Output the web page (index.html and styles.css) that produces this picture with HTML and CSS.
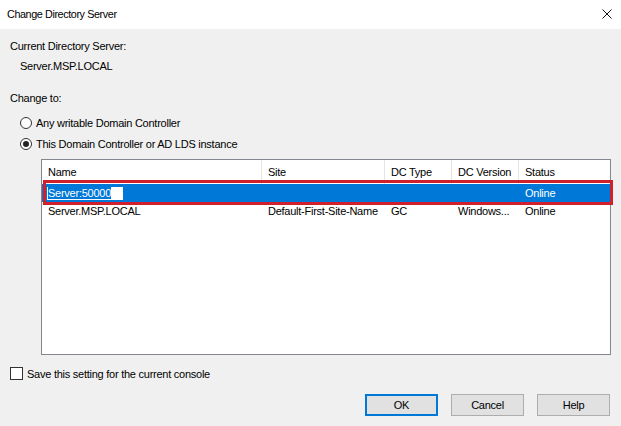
FILE: index.html
```html
<!DOCTYPE html>
<html lang="en">
<head>
    <meta charset="UTF-8">
    <title>Change Directory Server</title>
    <link rel="stylesheet" href="styles.css">
</head>
<body>
    <div class="dialog">
        <div class="titlebar">
            <span class="title">Change Directory Server</span>
            <svg class="close" width="10" height="10" viewBox="0 0 10 10">
                <path d="M0.5 0.5 L9.5 9.5 M9.5 0.5 L0.5 9.5" stroke="#111" stroke-width="1" fill="none"/>
            </svg>
        </div>

        <div class="content">
            <div class="label first">Current Directory Server:</div>
            <div class="label value">Server.MSP.LOCAL</div>
            <div class="label change">Change to:</div>

            <div class="radios">
                <div class="radio-row">
                    <span class="radio"></span>
                    <span>Any writable Domain Controller</span>
                </div>
                <div class="radio-row">
                    <span class="radio checked"></span>
                    <span>This Domain Controller or AD LDS instance</span>
                </div>
            </div>

            <div class="listview">
                <div class="lv-row lv-header">
                    <div class="cell">Name</div>
                    <div class="cell">Site</div>
                    <div class="cell">DC Type</div>
                    <div class="cell">DC Version</div>
                    <div class="cell">Status</div>
                </div>
                <div class="lv-row selected">
                    <div class="cell name-cell"><span class="edit"><span class="edit-text">Server:50000</span></span></div>
                    <div class="cell"></div>
                    <div class="cell"></div>
                    <div class="cell"></div>
                    <div class="cell">Online</div>
                </div>
                <div class="lv-row">
                    <div class="cell">Server.MSP.LOCAL</div>
                    <div class="cell">Default-First-Site-Name</div>
                    <div class="cell">GC</div>
                    <div class="cell">Windows...</div>
                    <div class="cell">Online</div>
                </div>
                <!-- red frame around the selected row -->
                <div class="highlight"></div>
            </div>

            <div class="check-row">
                <span class="checkbox"></span>
                <span>Save this setting for the current console</span>
            </div>

            <div class="buttons">
                <button class="btn default">OK</button>
                <button class="btn">Cancel</button>
                <button class="btn">Help</button>
            </div>
        </div>
    </div>
</body>
</html>
```

FILE: styles.css
```css
body {
    margin: 0;
    font-family: "Liberation Sans", Arial, sans-serif;
    font-size: 11px;
    letter-spacing: -0.25px;
    color: #000;
    background-color: #f0f0f0;
}

.dialog {
    width: 621px;
    height: 426px;
    overflow: hidden;
}

.titlebar {
    height: 29px;
    background-color: #fff;
    display: flex;
    align-items: center;
    justify-content: space-between;
    padding: 0 9px 2px 7px;
    box-sizing: border-box;
}

.title {
    font-size: 10.8px;
    letter-spacing: -0.4px;
    color: #000;
}

.content {
    padding: 0 10px;
    display: flex;
    flex-direction: column;
}

.label {
    line-height: 13px;
}

.label.first {
    margin-top: 11px;
}

.label.value {
    margin-top: 7px;
    padding-left: 10px;
}

.label.change {
    margin-top: 19px;
}

.radios {
    margin-top: 7px;
    padding-left: 10px;
}

.radio-row {
    height: 21px;
    display: flex;
    align-items: center;
    gap: 4px;
}

.radio {
    width: 12px;
    height: 12px;
    border: 1px solid #333;
    border-radius: 50%;
    background-color: #fff;
    box-sizing: border-box;
    display: flex;
    align-items: center;
    justify-content: center;
}

.radio.checked::after {
    content: "";
    width: 6px;
    height: 6px;
    border-radius: 50%;
    background-color: #222;
}

.listview {
    position: relative;
    margin-top: 5px;
    margin-left: 31px;
    width: 570px;
    height: 196px;
    border: 1px solid #828790;
    background-color: #fff;
    box-sizing: border-box;
}

.lv-row {
    display: grid;
    grid-template-columns: 220px 123px 67px 67px 70px;
    height: 18px;
    align-items: center;
}

.lv-header {
    height: 24px;
    align-items: stretch;
}

.lv-header .cell {
    display: flex;
    align-items: center;
    border-right: 1px solid #e5e5e5;
}

.lv-header .cell:last-child {
    border-right: none;
}

.cell {
    padding-left: 6px;
    white-space: nowrap;
    overflow: hidden;
}

.selected {
    background-color: #0078d7;
    color: #fff;
}

.edit {
    display: inline-block;
    background-color: #fff;
    padding: 1px 12px 1px 1px;
    line-height: 11px;
    margin-left: -1px;
}

.edit-text {
    background-color: #0078d7;
    color: #fff;
}

.highlight {
    position: absolute;
    left: 1px;
    top: 20px;
    width: 570px;
    height: 25px;
    border: 3px solid #d0202e;
    box-sizing: border-box;
}

.check-row {
    margin-top: 12px;
    height: 13px;
    display: flex;
    align-items: center;
    gap: 4px;
}

.checkbox {
    width: 13px;
    height: 13px;
    border: 1px solid #333;
    background-color: #fff;
    box-sizing: border-box;
}

.buttons {
    margin-top: 14px;
    display: flex;
    justify-content: flex-end;
    gap: 13px;
    padding-right: 1px;
}

.btn {
    width: 73px;
    height: 22px;
    background-color: #e1e1e1;
    border: 1px solid #adadad;
    font-family: "Liberation Sans", Arial, sans-serif;
    font-size: 11px;
    letter-spacing: -0.25px;
    color: #000;
    padding: 0;
}

.btn.default {
    border: 2px solid #0078d7;
}
```
